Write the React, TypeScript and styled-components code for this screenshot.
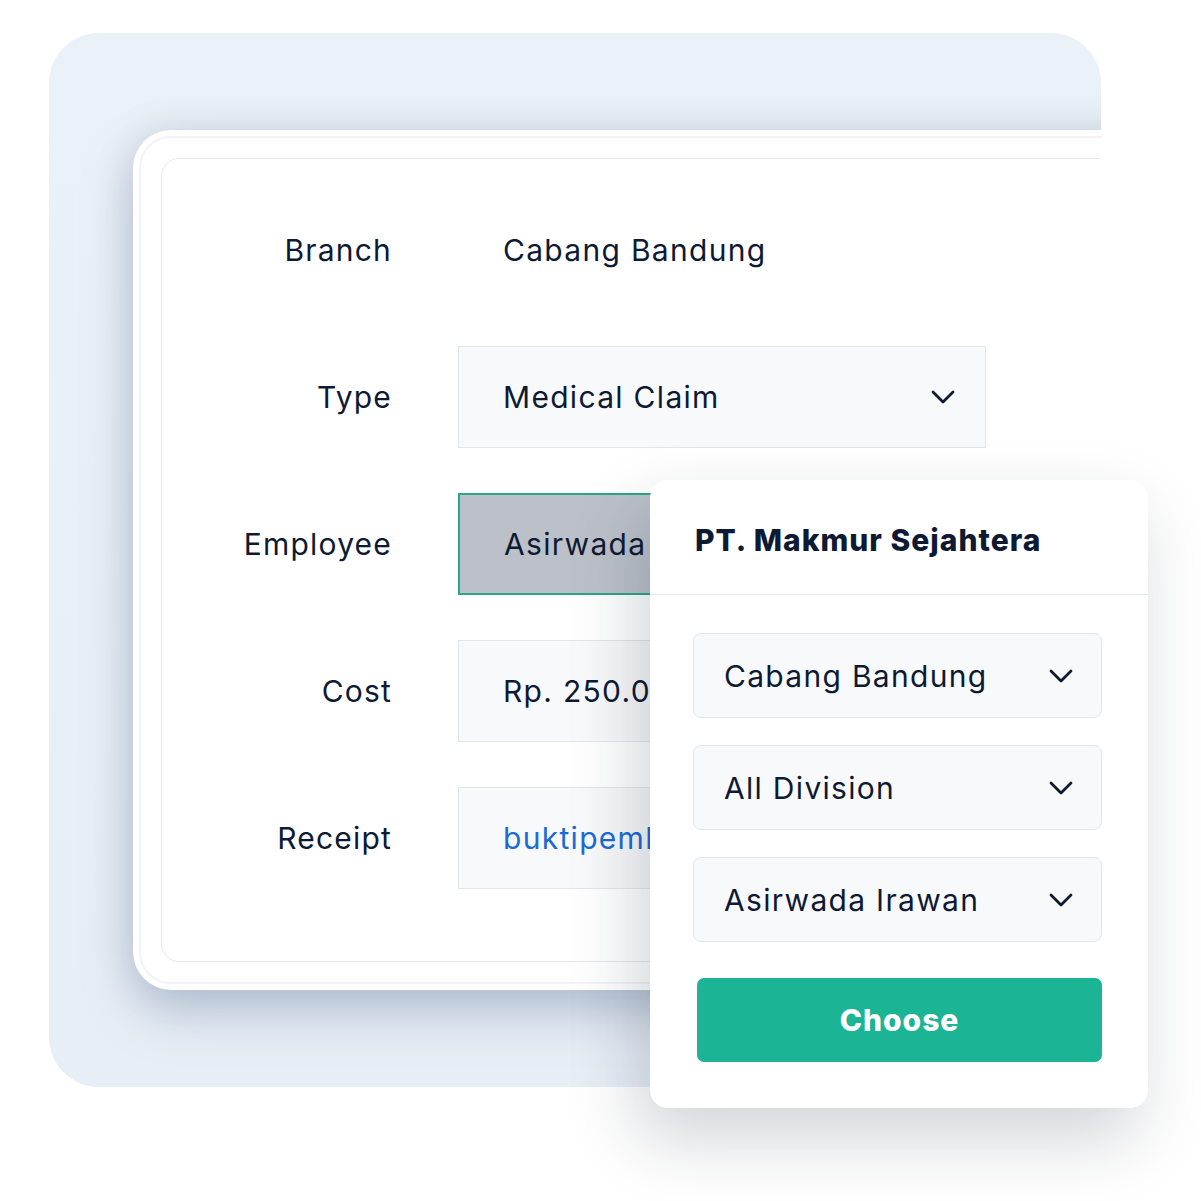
import styled, { createGlobalStyle } from "styled-components";

const GlobalStyle = createGlobalStyle`
  body {
    margin: 0;
    background: #ffffff;
    font-family: Inter, "Noto Sans", sans-serif;
    color: #0e1a33;
  }
`;

const Stage = styled.div`
  position: relative;
  width: 1201px;
  height: 1201px;
  box-sizing: border-box;
  padding: 33px 0 0 49px;
  overflow: hidden;
`;

const BackPanel = styled.div`
  width: 1052px;
  height: 1054px;
  box-sizing: border-box;
  padding: 97px 0 0 84px;
  border-radius: 50px;
  background: linear-gradient(180deg, #ebf1f8 0%, #e7eef6 100%);
  overflow: hidden;
`;

const Card = styled.div`
  width: 1100px;
  height: 860px;
  box-sizing: border-box;
  padding: 6px;
  background: #ffffff;
  border-radius: 38px;
  box-shadow: 0 22px 50px rgba(105, 125, 155, 0.38),
    0 0 36px rgba(105, 125, 155, 0.18);
`;

const Ring = styled.div`
  height: 100%;
  box-sizing: border-box;
  padding: 20px;
  border: 2px solid #f1f3f6;
  border-radius: 32px;
`;

const Inner = styled.div`
  height: 100%;
  box-sizing: border-box;
  padding-top: 40px;
  border: 1.5px solid #e4e8ee;
  border-radius: 18px;
  display: grid;
  grid-template-columns: 230px 528px;
  grid-auto-rows: 102px;
  column-gap: 66px;
  row-gap: 45px;
  align-content: start;
`;

const Label = styled.div`
  display: flex;
  align-items: center;
  justify-content: flex-end;
  font-size: 30px;
  letter-spacing: 1.2px;
`;

const Field = styled.div<{ $boxed?: boolean; $active?: boolean; $link?: boolean }>`
  display: flex;
  align-items: center;
  justify-content: space-between;
  box-sizing: border-box;
  padding: 0 30px 0 44px;
  font-size: 30px;
  letter-spacing: 1.3px;
  white-space: nowrap;
  overflow: hidden;
  color: ${({ $link }) => ($link ? "#1c6ad6" : "#0e1a33")};
  background: ${({ $boxed, $active }) =>
    $active ? "#bcc1c9" : $boxed ? "#f8f9fa" : "transparent"};
  border: ${({ $boxed, $active }) =>
    $active
      ? "2px solid #2ba68b"
      : $boxed
      ? "1.5px solid #e2e6ec"
      : "1.5px solid transparent"};
`;

const Popup = styled.div`
  position: absolute;
  left: 650px;
  top: 480px;
  width: 498px;
  height: 628px;
  box-sizing: border-box;
  background: #ffffff;
  border-radius: 18px;
  box-shadow: -12px 30px 70px rgba(25, 35, 55, 0.2);
  display: flex;
  flex-direction: column;
`;

const PopupHeader = styled.div`
  height: 115px;
  box-sizing: border-box;
  display: flex;
  align-items: center;
  padding: 6px 0 0 45px;
  border-bottom: 1.5px solid #e5e9ef;
  font-size: 30px;
  font-weight: 800;
  letter-spacing: 1px;
`;

const PopupBody = styled.div`
  display: flex;
  flex-direction: column;
  gap: 27px;
  padding: 38px 46px 46px 43px;
`;

const Select = styled.div`
  height: 85px;
  box-sizing: border-box;
  display: flex;
  align-items: center;
  justify-content: space-between;
  padding: 0 28px 0 30px;
  background: #f8f9fa;
  border: 1.5px solid #e2e6ec;
  border-radius: 8px;
  font-size: 30px;
  letter-spacing: 1.3px;
`;

const ChooseButton = styled.button`
  height: 84px;
  margin: 9px 0 0 4px;
  border: none;
  border-radius: 7px;
  background: #1bb494;
  color: #ffffff;
  font-family: inherit;
  font-size: 30px;
  font-weight: 800;
  letter-spacing: 1px;
`;

const Chevron = () => (
  <svg width="24" height="14" viewBox="0 0 24 14" fill="none">
    <path
      d="M2 2 L12 12 L22 2"
      stroke="#0e1a33"
      strokeWidth="2.8"
      strokeLinecap="round"
      strokeLinejoin="round"
    />
  </svg>
);

export default function App() {
  return (
    <>
      <GlobalStyle />
      <Stage>
        <BackPanel>
          <Card>
            <Ring>
              <Inner>
                <Label>Branch</Label>
                <Field>Cabang Bandung</Field>

                <Label>Type</Label>
                <Field $boxed>
                  Medical Claim
                  <Chevron />
                </Field>

                <Label>Employee</Label>
                <Field $active>Asirwada Irawan</Field>

                <Label>Cost</Label>
                <Field $boxed>Rp. 250.000</Field>

                <Label>Receipt</Label>
                <Field $boxed $link>
                  buktipembayaran.pdf
                </Field>
              </Inner>
            </Ring>
          </Card>
        </BackPanel>

        <Popup>
          <PopupHeader>PT. Makmur Sejahtera</PopupHeader>
          <PopupBody>
            <Select>
              Cabang Bandung
              <Chevron />
            </Select>
            <Select>
              All Division
              <Chevron />
            </Select>
            <Select>
              Asirwada Irawan
              <Chevron />
            </Select>
            <ChooseButton>Choose</ChooseButton>
          </PopupBody>
        </Popup>
      </Stage>
    </>
  );
}
